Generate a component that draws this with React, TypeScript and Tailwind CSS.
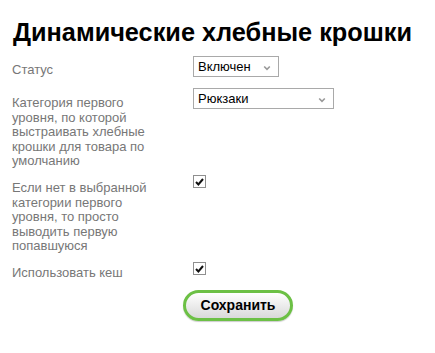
import type { ReactNode } from 'react';

function Chevron() {
  return (
    <svg width="8" height="6" viewBox="0 0 8 6" className="absolute right-[7px] top-[8px]">
      <path d="M1.2 1.5 4 4.3 6.8 1.5" fill="none" stroke="#999" strokeWidth="1.6" />
    </svg>
  );
}

function Select({ value, width }: { value: string; width: string }) {
  return (
    <div
      className={`relative h-[21px] ${width} border border-[#a9a9a9] bg-white pl-[4px] text-[13px] leading-[19px] text-black`}
    >
      {value}
      <Chevron />
    </div>
  );
}

function Checkbox() {
  return (
    <div className="flex h-[13px] w-[13px] items-center justify-center border border-[#8f8f8f] bg-white">
      <svg width="9" height="8" viewBox="0 0 9 8">
        <path d="M1 4 3.4 6.5 8 1" fill="none" stroke="#111" strokeWidth="2" />
      </svg>
    </div>
  );
}

function Row({ label, children, className }: { label: ReactNode; children: ReactNode; className: string }) {
  return (
    <div className={`flex ${className}`}>
      <div className="w-[181px] shrink-0">{label}</div>
      <div>{children}</div>
    </div>
  );
}

export default function App() {
  return (
    <div className="min-h-screen bg-white font-['Liberation_Sans',Arial,sans-serif]">
      <h1 className="pl-[13px] pt-[17px] text-[25.3px] font-bold leading-[30px] text-black">
        Динамические хлебные крошки
      </h1>

      <div className="pl-[12px] text-[13px] leading-[14.4px] text-[#777]">
        <Row className="mt-[9px]" label={<div className="w-[145px] pt-[7px]">Статус</div>}>
          <Select value="Включен" width="w-[86px]" />
        </Row>

        <Row
          className="mt-[11px]"
          label={
            <div className="w-[145px] pt-[8px]">
              Категория первого уровня, по которой выстраивать хлебные крошки для товара по умолчанию
            </div>
          }
        >
          <Select value="Рюкзаки" width="w-[141px]" />
        </Row>

        <Row
          className="mt-[7px]"
          label={
            <div className="w-[145px] pt-[6px]">
              Если нет в выбранной категории первого уровня, то просто выводить первую попавшуюся
            </div>
          }
        >
          <Checkbox />
        </Row>

        <Row className="mt-[9px]" label={<div className="w-[145px] pt-[4px]">Использовать кеш</div>}>
          <Checkbox />
        </Row>
      </div>

      <div className="mt-[9px] flex pl-[183px]">
        <button className="h-[31px] w-[110px] rounded-full border-[3px] border-[#6cc045] bg-gradient-to-b from-white to-[#d9d9d9] text-[14px] font-bold text-black shadow-[0_1px_1px_rgba(0,0,0,0.2)]">
          Сохранить
        </button>
      </div>
    </div>
  );
}
